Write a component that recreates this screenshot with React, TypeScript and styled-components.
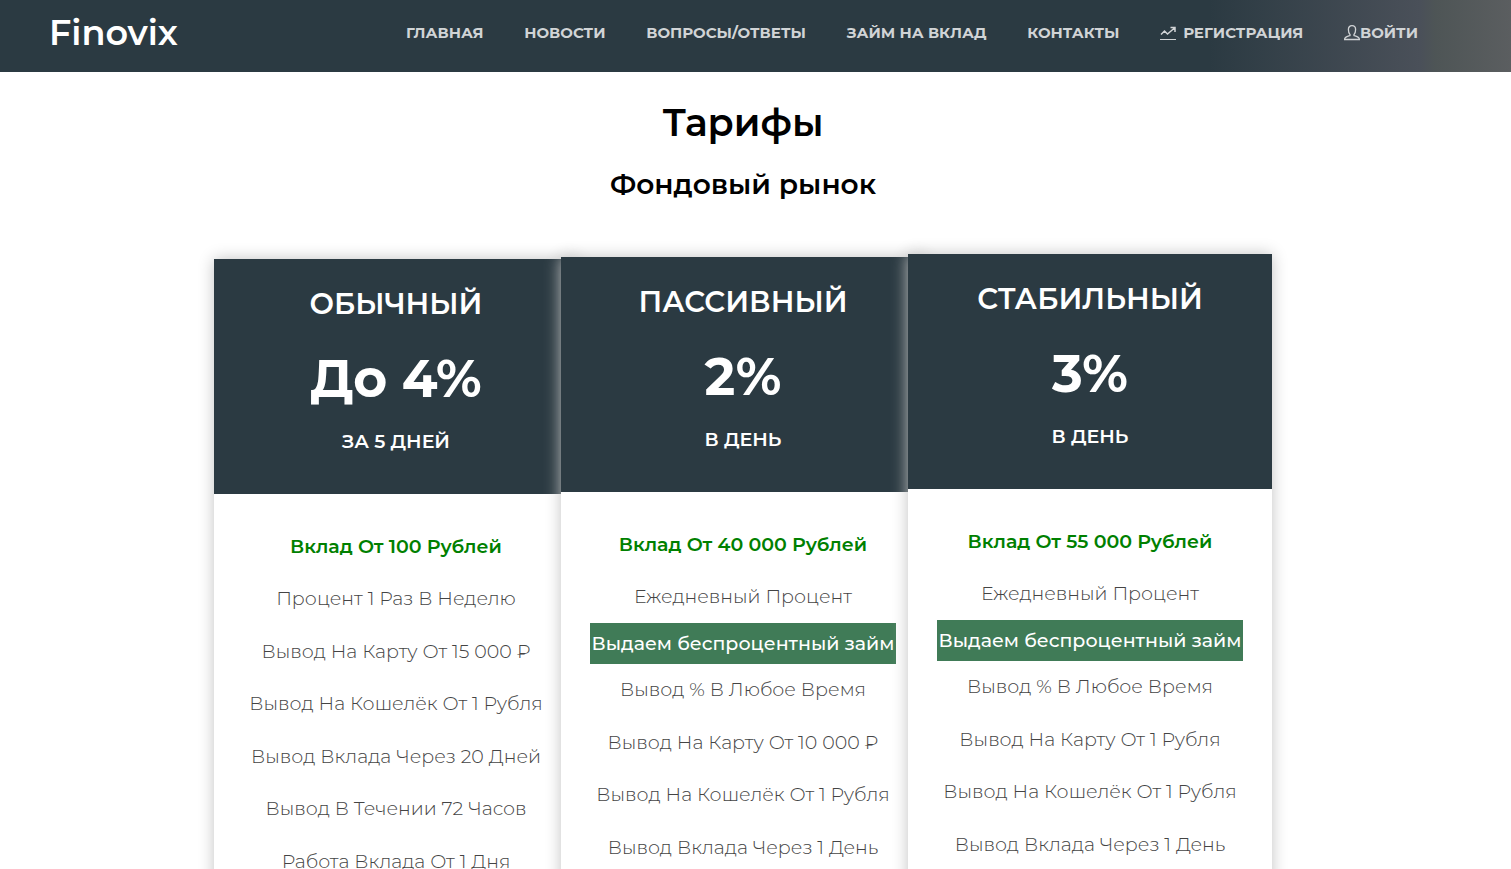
import React from "react";
import styled, { createGlobalStyle } from "styled-components";

const GlobalStyle = createGlobalStyle`
  * { box-sizing: border-box; }
  body {
    margin: 0;
    background: #fff;
    color: #000;
    font-family: Montserrat, Inter, "Liberation Sans", sans-serif;
  }
`;

const Header = styled.header`
  display: flex;
  justify-content: space-between;
  align-items: flex-start;
  height: 72px;
  padding: 0 93px 0 49px;
  background: linear-gradient(90deg, #2b3a42 80%, #4a5059 94%, #4e5556 95%, #5b5e60 100%);
`;

const Brand = styled.a`
  color: #fff;
  font-size: 35px;
  font-weight: 600;
  line-height: 66px;
  text-decoration: none;
`;

const Nav = styled.nav`
  display: flex;
  justify-content: space-between;
  flex: 0 1 1012px;
`;

const NavLink = styled.a<{ $gap?: number }>`
  display: inline-flex;
  align-items: center;
  gap: ${({ $gap = 0 }) => $gap}px;
  color: #d1d4d6;
  font-size: 15px;
  font-weight: 700;
  line-height: 66px;
  text-decoration: none;
  white-space: nowrap;
`;

const Icon = styled.svg`
  width: 16px;
  height: 16px;
  flex: none;
  fill: none;
  stroke: currentColor;
`;

const Main = styled.main`
  padding: 0 25px 0 0;
  text-align: center;
`;

const Title = styled.h1`
  margin: 0;
  padding-top: 26px;
  font-size: 38px;
  font-weight: 600;
  line-height: 50px;
`;

const Subtitle = styled.h2`
  margin: 0;
  padding-top: 18px;
  font-size: 28px;
  font-weight: 600;
  line-height: 36px;
`;

const Plans = styled.section`
  display: flex;
  align-items: flex-start;
  width: 100%;
  max-width: 1058px;
  margin: 52px auto 0;
`;

const Plan = styled.article<{ $drop: number }>`
  flex: 1 1 0;
  min-width: 0;
  margin-top: ${({ $drop }) => $drop}px;
  background: #fff;
  box-shadow: 0 0 15px #c2c2c2;

  & + & {
    margin-left: -17px;
  }
`;

const PlanHead = styled.header`
  height: 235px;
  padding-top: 25px;
  background: #2b3a42;
  color: #fff;
`;

const PlanName = styled.h3`
  margin: 0;
  font-size: 29px;
  font-weight: 600;
  line-height: 40px;
`;

const Rate = styled.p`
  margin: 20px 0 0;
  font-size: 52px;
  font-weight: 700;
  line-height: 70px;
`;

const Term = styled.p`
  margin: 16px 0 0;
  font-size: 19px;
  font-weight: 600;
  line-height: 24px;
`;

const Features = styled.ul`
  display: flex;
  flex-direction: column;
  align-items: center;
  margin: 0;
  padding: 26px 0 30px;
  list-style: none;
`;

const Feature = styled.li<{ $lead?: boolean }>`
  color: ${({ $lead }) => ($lead ? "#008000" : "#444")};
  font-size: 19px;
  font-weight: ${({ $lead }) => ($lead ? 600 : 300)};
  line-height: 53px;
  white-space: nowrap;

  &:nth-child(even) {
    line-height: 52px;
  }
`;

const LoanFeature = styled.li`
  width: 306px;
  background: #407b57;
  color: #fff;
  font-size: 19px;
  font-weight: 500;
  line-height: 41px;
  white-space: nowrap;
`;

const GraphIcon = () => (
  <Icon viewBox="0 0 16 16" aria-hidden="true">
    <path d="M1 9.5 4.5 6 7.5 9 14.5 3M10.5 2.5H15V7" strokeWidth="1.5" />
    <path d="M0 14.5H16" />
  </Icon>
);

const UserIcon = () => (
  <Icon viewBox="0 0 16 16" aria-hidden="true">
    <path
      d="M6 9.4C4.8 8.4 4.4 6.8 4.4 4.6 4.4 2 5.8.7 8 .7S11.6 2 11.6 4.6C11.6 6.8 11.2 8.4 10 9.4V10.6C12.8 11.4 15.4 12 15.5 14.5H.5C.6 12 3.2 11.4 6 10.6Z"
      strokeWidth="1.3"
    />
  </Icon>
);

const links = ["ГЛАВНАЯ", "НОВОСТИ", "ВОПРОСЫ/ОТВЕТЫ", "ЗАЙМ НА ВКЛАД", "КОНТАКТЫ"];

const LOAN = "Выдаем беспроцентный займ";

const plans = [
  {
    name: "ОБЫЧНЫЙ",
    rate: "До 4%",
    term: "ЗА 5 ДНЕЙ",
    drop: 5,
    features: [
      "Вклад От 100 Рублей",
      "Процент 1 Раз В Неделю",
      "Вывод На Карту От 15 000 ₽",
      "Вывод На Кошелёк От 1 Рубля",
      "Вывод Вклада Через 20 Дней",
      "Вывод В Течении 72 Часов",
      "Работа Вклада От 1 Дня",
    ],
  },
  {
    name: "ПАССИВНЫЙ",
    rate: "2%",
    term: "В ДЕНЬ",
    drop: 3,
    features: [
      "Вклад От 40 000 Рублей",
      "Ежедневный Процент",
      LOAN,
      "Вывод % В Любое Время",
      "Вывод На Карту От 10 000 ₽",
      "Вывод На Кошелёк От 1 Рубля",
      "Вывод Вклада Через 1 День",
    ],
  },
  {
    name: "СТАБИЛЬНЫЙ",
    rate: "3%",
    term: "В ДЕНЬ",
    drop: 0,
    features: [
      "Вклад От 55 000 Рублей",
      "Ежедневный Процент",
      LOAN,
      "Вывод % В Любое Время",
      "Вывод На Карту От 1 Рубля",
      "Вывод На Кошелёк От 1 Рубля",
      "Вывод Вклада Через 1 День",
    ],
  },
];

export default function App() {
  return (
    <>
      <GlobalStyle />
      <Header>
        <Brand href="#">Finovix</Brand>
        <Nav>
          {links.map((label) => (
            <NavLink href="#" key={label}>
              {label}
            </NavLink>
          ))}
          <NavLink href="#" $gap={7}>
            <GraphIcon />
            РЕГИСТРАЦИЯ
          </NavLink>
          <NavLink href="#">
            <UserIcon />
            ВОЙТИ
          </NavLink>
        </Nav>
      </Header>
      <Main>
        <Title>Тарифы</Title>
        <Subtitle>Фондовый рынок</Subtitle>
        <Plans>
          {plans.map((plan) => (
            <Plan key={plan.name} $drop={plan.drop}>
              <PlanHead>
                <PlanName>{plan.name}</PlanName>
                <Rate>{plan.rate}</Rate>
                <Term>{plan.term}</Term>
              </PlanHead>
              <Features>
                {plan.features.map((text, i) =>
                  text === LOAN ? (
                    <LoanFeature key={text}>{text}</LoanFeature>
                  ) : (
                    <Feature key={text} $lead={i === 0}>
                      {text}
                    </Feature>
                  )
                )}
              </Features>
            </Plan>
          ))}
        </Plans>
      </Main>
    </>
  );
}
